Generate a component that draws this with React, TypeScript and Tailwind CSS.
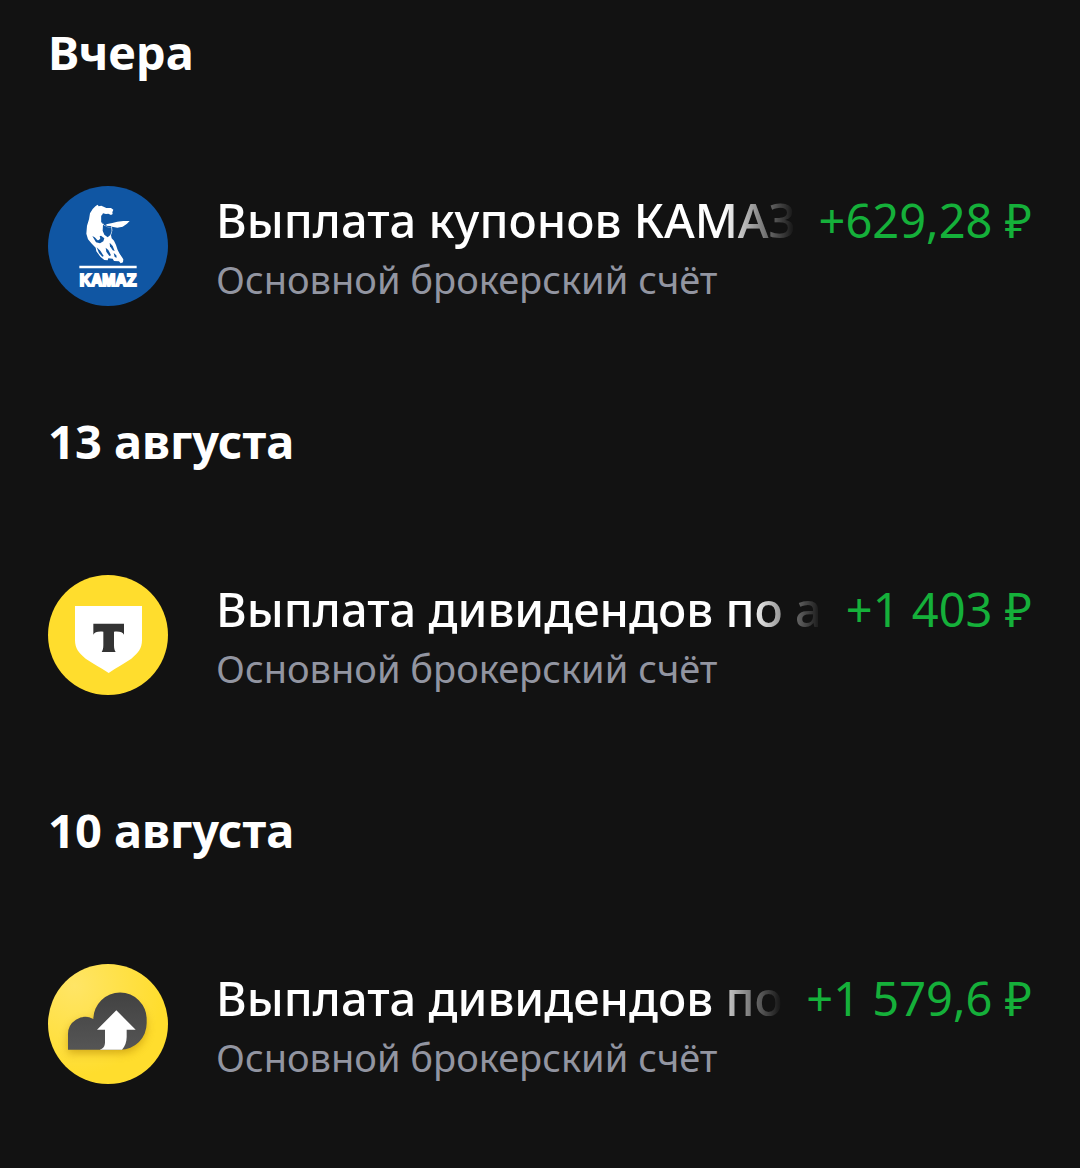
import type { ReactNode } from "react";

type Operation = {
  date: string;
  title: string;
  account: string;
  amount: string;
  logo: ReactNode;
};

function KamazLogo() {
  return (
    <svg viewBox="24 24 360 360" className="size-full" aria-hidden="true">
      <rect x="24" y="24" width="360" height="360" fill="#1056a3" />
      <g fill="#fff">
        <path d="M167 84 L173 80 L176 85 L184 83 L199 90 L213 90 L220 95 L217 103 L218 108 L213 111 L205 107 L198 108 L189 106 L184 115 L184 132 L190 136 L196 141 L202 138 L217 135 L232 131 L250 129 L269 129 L261 137 L248 146 L232 149 L216 146 L217 158 L213 172 L215 181 L222 188 L228 201 L233 216 L239 227 L250 244 L249 253 L242 256 L237 250 L222 249 L218 242 L205 241 L203 247 L193 246 L181 236 L169 220 L167 209 L154 196 L144 184 L139 167 L141 143 L147 124 L150 106 L158 93 Z" />
        <path d="M118 263 h172 v8 h-172 Z" />
      </g>
      <g fill="#1056a3">
        <path d="M189 140 L203 148 L214 148 L215 160 L211 171 L203 178 L193 170 L188 158 Z" />
        <path d="M157 174 Q166 177 171 185 Q176 190 181 181 L179 175 L183 173 L193 181 L190 190 L180 196 L168 193 Z" />
        <path d="M170 208 L181 218 L191 234 L187 236 L177 225 Z" />
        <path d="M197 209 L205 216 L213 232 L208 234 L199 221 Z" />
        <path d="M209 194 L218 204 L224 219 L218 217 L210 205 Z" />
        <path d="M221 225 L229 232 L230 239 L224 237 Z" />
      </g>
      <path d="M186 112 V134 L201 145 L214 146" fill="none" stroke="#1056a3" strokeWidth="3" />
      <text x="204" y="325" textAnchor="middle" fill="#fff" stroke="#fff" strokeWidth="6" className="font-['Liberation_Sans',sans-serif] text-[47px] font-bold">
        KAMAZ
      </text>
    </svg>
  );
}

function TBankLogo() {
  return (
    <svg viewBox="24 24 360 360" className="size-full" aria-hidden="true">
      <rect x="24" y="24" width="360" height="360" fill="#ffdd2d" />
      <path d="M105 117 H306 V220 C306 244 294 259 274 275 C255 288 230 301 206 318 C181 301 156 288 137 275 C117 259 105 244 105 220 Z" fill="#fff" />
      <path d="M160 170 H252 V203 C248 195 240 193 222 194 V235 C222 245 224 251 227 255 H185 C188 251 190 245 190 235 V194 C172 193 164 195 160 203 Z" fill="#333" />
    </svg>
  );
}

function CloudLogo() {
  return (
    <svg viewBox="24 24 360 360" className="size-full" aria-hidden="true">
      <defs>
        <radialGradient id="sun" cx="0.22" cy="0.18" r="0.75">
          <stop offset="0" stopColor="#ffe566" />
          <stop offset="1" stopColor="#ffdd2d" />
        </radialGradient>
        <linearGradient id="cloud" x1="0" y1="0" x2="0" y2="1">
          <stop offset="0" stopColor="#424242" />
          <stop offset="1" stopColor="#555" />
        </linearGradient>
        <filter id="shade" x="-30%" y="-30%" width="160%" height="160%">
          <feGaussianBlur stdDeviation="12" />
        </filter>
      </defs>
      <rect x="24" y="24" width="360" height="360" fill="url(#sun)" />
      <path d="M84 292 V245 A52 52 0 0 1 161 200 A80 80 0 1 1 242 292 Z" fill="#b98a00" opacity="0.6" filter="url(#shade)" />
      <path d="M84 281 V238 A52 52 0 0 1 160 189 A80 80 0 0 1 320 190 V202 A79 79 0 0 1 241 281 Z" fill="url(#cloud)" />
      <path d="M229 163 L287 221 H260 V243 C260 258 255 271 246 281 H179 C189 279 195 271 195 258 V221 H171 Z" fill="#fff" />
    </svg>
  );
}

const operations: Operation[] = [
  {
    date: "Вчера",
    title: "Выплата купонов КАМАЗ",
    account: "Основной брокерский счёт",
    amount: "+629,28 ₽",
    logo: <KamazLogo />,
  },
  {
    date: "13 августа",
    title: "Выплата дивидендов по а",
    account: "Основной брокерский счёт",
    amount: "+1 403 ₽",
    logo: <TBankLogo />,
  },
  {
    date: "10 августа",
    title: "Выплата дивидендов по",
    account: "Основной брокерский счёт",
    amount: "+1 579,6 ₽",
    logo: <CloudLogo />,
  },
];

export default function App() {
  return (
    <main className="min-h-screen bg-[#121212] px-12 pt-[22px] pb-20 font-['Noto_Sans',sans-serif] text-white">
      <div className="flex flex-col gap-[105px]">
        {operations.map((op) => (
          <section key={op.date} className="flex flex-col gap-[104px]">
            <h2 className="text-[47px] leading-[60px] font-bold">{op.date}</h2>
            <div className="flex items-center gap-12">
              <div className="size-[120px] shrink-0 overflow-hidden rounded-full">{op.logo}</div>
              <div className="min-w-0 flex-1">
                <div className="flex gap-6 text-[47px] leading-[66px]">
                  <h3 className="min-w-0 flex-1 overflow-hidden font-medium whitespace-nowrap [mask-image:linear-gradient(to_left,transparent,black_72px)]">
                    {op.title}
                  </h3>
                  <p className="shrink-0 whitespace-nowrap text-[#15b03a]">{op.amount}</p>
                </div>
                <p className="text-[38px] leading-[52px] text-[#9295a1]">{op.account}</p>
              </div>
            </div>
          </section>
        ))}
      </div>
    </main>
  );
}
